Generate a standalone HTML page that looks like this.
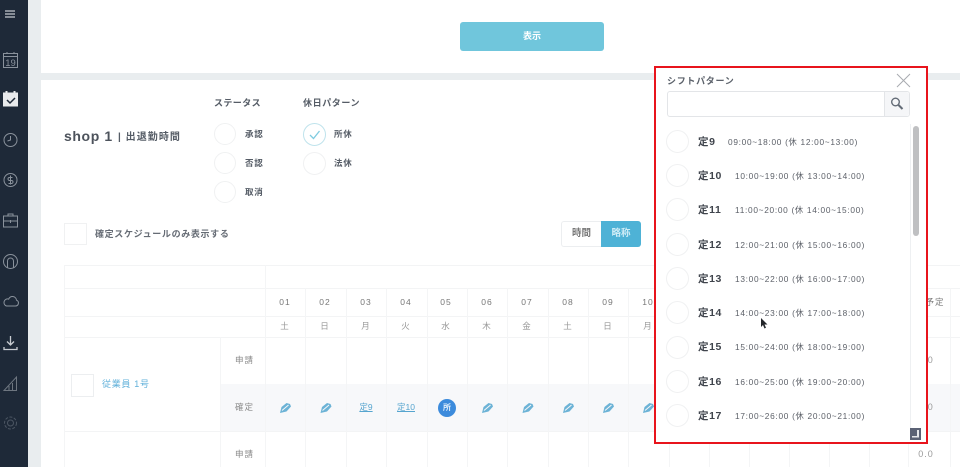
<!DOCTYPE html>
<html lang="ja"><head><meta charset="utf-8"><style>
*{box-sizing:border-box}
html,body{margin:0;padding:0}
body{width:960px;height:467px;overflow:hidden;background:#fff;position:relative;font-family:"Liberation Sans","Noto Sans CJK JP",sans-serif;color:#555c66}
#w{position:absolute;left:0;top:0;width:960px;height:467px;overflow:hidden;background:#fff;filter:blur(.35px)}
.a{position:absolute;white-space:nowrap}
.h{position:absolute;background:#f3f4f5;height:1px}
.v{position:absolute;background:#f4f5f6;width:1px}
.c{position:absolute;border:1.5px solid #f0f1f2;border-radius:50%;background:#fff}
.t{font-size:9px;font-weight:bold;letter-spacing:.8px;line-height:12px;color:#555c66}
.d{font-size:8.5px;letter-spacing:1px;color:#777;line-height:12px;width:40px;text-align:center}
.w{color:#999}
.p{position:absolute}
.nm{position:absolute;left:698px;font-size:10.5px;font-weight:bold;letter-spacing:.6px;color:#3f444c;line-height:14px;white-space:nowrap}
.tm{position:absolute;font-size:8.3px;letter-spacing:.7px;color:#5c6068;line-height:12px;white-space:nowrap}
.lk{font-size:8.5px;color:#56a5cf;text-decoration:underline;width:40px;text-align:center;line-height:12px}
</style></head><body><div id="w">
<div class="a" style="left:0;top:0;width:28px;height:467px;background:#1e2938"></div>
<div class="a" style="left:28px;top:0;width:13px;height:467px;background:#e9edef"></div>
<div class="a" style="left:41px;top:73px;width:919px;height:7px;background:#e9edef"></div>

<svg class="p" style="left:0;top:0" width="28" height="467" fill="none" stroke="#8a929c" stroke-width="1">
<path d="M5 11h10M5 14h10M5 17h10" stroke="#c5c9ce" stroke-width="1.2"/>
<rect x="3.5" y="53.5" width="14" height="14"/><path d="M3.5 56.5h14M7 52v2M14 52v2"/>
<text x="10.5" y="66" font-size="9.5" font-family="Liberation Sans" fill="#8a929c" stroke="none" text-anchor="middle">19</text>
<rect x="3.5" y="93" width="14" height="13" fill="#e8eaec" stroke="#e8eaec"/><path d="M6.5 91v4M14.5 91v4" stroke="#e8eaec" stroke-width="2"/><path d="M7 100l3 3 5-5" stroke="#1e2938" stroke-width="1.5"/>
<circle cx="10.5" cy="140" r="6.5"/><path d="M10.5 136v4l-3 1"/>
<circle cx="10.5" cy="180" r="6.5"/><path d="M12.5 177.5h-3a1.3 1.3 0 0 0 0 3h2a1.3 1.3 0 0 1 0 3h-3M10.5 175.5v9"/>
<rect x="3.5" y="216" width="14" height="11"/><path d="M8 216v-2h5v2M3.5 221h14M10.5 220v3"/>
<circle cx="10.5" cy="261.5" r="7"/><path d="M7.5 268v-7a3 3 0 0 1 6 0v7"/>
<path d="M6.5 306h9a3 3 0 0 0 1-5.8 4 4 0 0 0-4-3.7 4 4 0 0 0-3.8 2.6 3.6 3.6 0 0 0-2.2 6.9z"/>
<path d="M10.5 336v9M7 341.500l3.500 3.500 3.500-3.500M4 347v2.500h13V347" stroke="#c8ccd1" stroke-width="1.300"/>
<path d="M4 390.500h12.500V377zM9 390v-4M12.500 390v-7" stroke="#6e7680"/>
<circle cx="10.500" cy="423" r="3" stroke="#4c5663"/><circle cx="10.500" cy="423" r="6" stroke="#4c5663" stroke-dasharray="3 1.500"/>
</svg>

<div class="a" style="left:460px;top:22px;width:144px;height:29px;background:#70c6dc;border-radius:3px;color:#fff;font-size:9px;font-weight:bold;text-align:center;line-height:28px">表示</div>

<div class="a t" style="left:214px;top:97px;letter-spacing:.4px">ステータス</div>
<div class="a t" style="left:303px;top:97px;letter-spacing:.6px">休日パターン</div>
<div class="a" style="left:64px;top:128px;font-size:14px;font-weight:bold;letter-spacing:.6px;line-height:17px;color:#4d535c">shop 1</div>
<div class="a t" style="left:118px;top:131px;font-size:10px;letter-spacing:1.05px;line-height:13px">| 出退勤時間</div>
<div class="c" style="left:214px;top:123px;width:22px;height:22px"></div>
<div class="c" style="left:214px;top:152px;width:22px;height:22px"></div>
<div class="c" style="left:214px;top:181px;width:22px;height:22px"></div>
<div class="a t" style="left:245px;top:128px;font-size:8.500px">承認</div>
<div class="a t" style="left:245px;top:157px;font-size:8.500px">否認</div>
<div class="a t" style="left:245px;top:186px;font-size:8.500px">取消</div>
<div class="c" style="left:303px;top:123px;width:23px;height:23px;border-color:#bfe3ec"></div>
<svg class="p" style="left:303px;top:123px" width="23" height="23" fill="none"><path d="M7 12l3.500 3.500L16.500 8" stroke="#7fcbe0" stroke-width="1.300"/></svg>
<div class="c" style="left:303px;top:152px;width:23px;height:23px"></div>
<div class="a t" style="left:334px;top:128px;font-size:8.500px">所休</div>
<div class="a t" style="left:334px;top:157px;font-size:8.500px">法休</div>
<div class="a" style="left:64px;top:223px;width:23px;height:22px;border:1.500px solid #f0f1f2"></div>
<div class="a t" style="left:95px;top:228px;color:#666c75;letter-spacing:.65px">確定スケジュールのみ表示する</div>

<div class="a" style="left:561px;top:221px;width:40px;height:26px;border:1.500px solid #eceef0;border-right:0;border-radius:3px 0 0 3px;font-size:9.500px;font-weight:bold;text-align:center;line-height:23px;color:#777">時間</div>
<div class="a" style="left:601px;top:221px;width:40px;height:26px;background:#4eb2d6;border-radius:0 3px 3px 0;font-size:9.500px;font-weight:bold;text-align:center;line-height:26px;color:#cfecf6">略称</div>

<!-- table -->
<div class="a" style="left:220px;top:384px;width:740px;height:47px;background:#f7f8fa"></div>
<div class="h" style="left:64px;top:265px;width:896px"></div>
<div class="h" style="left:64px;top:288px;width:896px"></div>
<div class="h" style="left:64px;top:316px;width:896px"></div>
<div class="h" style="left:64px;top:337px;width:896px"></div>
<div class="h" style="left:64px;top:431px;width:896px"></div>
<div class="v" style="left:64px;top:265px;height:202px"></div>
<div class="v" style="left:220px;top:337px;height:130px"></div>
<div class="v" style="left:265px;top:265px;height:202px"></div>
<div class="v" style="left:305px;top:288px;height:179px"></div>
<div class="v" style="left:346px;top:288px;height:179px"></div>
<div class="v" style="left:386px;top:288px;height:179px"></div>
<div class="v" style="left:427px;top:288px;height:179px"></div>
<div class="v" style="left:467px;top:288px;height:179px"></div>
<div class="v" style="left:507px;top:288px;height:179px"></div>
<div class="v" style="left:548px;top:288px;height:179px"></div>
<div class="v" style="left:588px;top:288px;height:179px"></div>
<div class="v" style="left:628px;top:288px;height:179px"></div>
<div class="v" style="left:669px;top:431px;height:36px"></div>
<div class="v" style="left:709px;top:431px;height:36px"></div>
<div class="v" style="left:749px;top:431px;height:36px"></div>
<div class="v" style="left:789px;top:431px;height:36px"></div>
<div class="v" style="left:829px;top:431px;height:36px"></div>
<div class="v" style="left:869px;top:431px;height:36px"></div>
<div class="v" style="left:908px;top:288px;height:179px"></div>
<div class="v" style="left:950px;top:288px;height:179px"></div>

<div class="a d" style="left:265px;top:296px">01</div><div class="a d" style="left:305px;top:296px">02</div><div class="a d" style="left:346px;top:296px">03</div><div class="a d" style="left:386px;top:296px">04</div><div class="a d" style="left:426px;top:296px">05</div><div class="a d" style="left:467px;top:296px">06</div><div class="a d" style="left:507px;top:296px">07</div><div class="a d" style="left:548px;top:296px">08</div><div class="a d" style="left:588px;top:296px">09</div><div class="a d" style="left:628px;top:296px">10</div>
<div class="a d w" style="left:265px;top:320px">土</div><div class="a d w" style="left:305px;top:320px">日</div><div class="a d w" style="left:346px;top:320px">月</div><div class="a d w" style="left:386px;top:320px">火</div><div class="a d w" style="left:426px;top:320px">水</div><div class="a d w" style="left:467px;top:320px">木</div><div class="a d w" style="left:507px;top:320px">金</div><div class="a d w" style="left:548px;top:320px">土</div><div class="a d w" style="left:588px;top:320px">日</div><div class="a d w" style="left:628px;top:320px">月</div>

<div class="a" style="left:71px;top:374px;width:23px;height:23px;border:1.500px solid #eceef0"></div>
<div class="a" style="left:102px;top:378px;font-size:9px;letter-spacing:.7px;line-height:12px;color:#62b1da">従業員 1号</div>
<div class="a d w" style="left:225px;top:354px;width:39px;color:#888">申請</div>
<div class="a d w" style="left:225px;top:401px;width:39px;color:#888">確定</div>
<div class="a d w" style="left:225px;top:448px;width:39px;color:#888">申請</div>

<svg class="p" style="left:265px;top:400px" width="400" height="16">
<g fill="#6cb3d6" stroke="none">
<path d="M15 13l1.500-6 5-4 3.500 1 1 2.500-4.500 5z"/><path d="M17 10.500l6.500-5.500" stroke="#f7f8fa" stroke-width="1" fill="none"/>
<path d="M55.500 13l1.500-6 5-4 3.500 1 1 2.500-4.500 5z"/><path d="M57.500 10.500l6.500-5.500" stroke="#f7f8fa" stroke-width="1" fill="none"/>
<path d="M217 13l1.500-6 5-4 3.500 1 1 2.500-4.500 5z"/><path d="M219 10.500l6.500-5.500" stroke="#f7f8fa" stroke-width="1" fill="none"/>
<path d="M257.500 13l1.500-6 5-4 3.500 1 1 2.500-4.500 5z"/><path d="M259.500 10.500l6.500-5.500" stroke="#f7f8fa" stroke-width="1" fill="none"/>
<path d="M298 13l1.500-6 5-4 3.500 1 1 2.500-4.500 5z"/><path d="M300 10.500l6.500-5.500" stroke="#f7f8fa" stroke-width="1" fill="none"/>
<path d="M338 13l1.500-6 5-4 3.500 1 1 2.500-4.500 5z"/><path d="M340 10.500l6.500-5.500" stroke="#f7f8fa" stroke-width="1" fill="none"/>
<path d="M378 13l1.500-6 5-4 3.500 1 1 2.500-4.500 5z"/><path d="M380 10.500l6.500-5.500" stroke="#f7f8fa" stroke-width="1" fill="none"/>
</g></svg>
<div class="a lk" style="left:346px;top:401px">定9</div>
<div class="a lk" style="left:386px;top:401px">定10</div>
<div class="a" style="left:438px;top:399px;width:18px;height:18px;border-radius:50%;background:#3c8bdc;color:#e4f0fb;font-size:8px;font-weight:bold;text-align:center;line-height:18px">所</div>

<div class="a d" style="left:915px;top:296px;width:40px;text-align:center">予定</div>
<div class="a d" style="left:906px;top:354px;color:#999;font-size:9px">0.0</div>
<div class="a d" style="left:906px;top:401px;color:#999;font-size:9px">0.0</div>
<div class="a d" style="left:906px;top:448px;color:#999;font-size:9px">0.0</div>

<!-- popup -->
<div class="a" style="left:654px;top:66px;width:274px;height:378px;background:#fff;border:2px solid #e8141c"></div>
<div class="v" style="left:910px;top:124px;height:310px;background:#eef0f2"></div>
<div class="a t" style="left:667px;top:75px;font-size:9px;color:#5c626b;letter-spacing:.7px">シフトパターン</div>
<svg class="p" style="left:896px;top:73px" width="16" height="15" fill="none"><path d="M1 1l13 13M14 1L1 14" stroke="#a8abb0" stroke-width="1"/></svg>
<div class="a" style="left:667px;top:91px;width:243px;height:26px;border:1px solid #e3e5e8;border-radius:3px;background:#fff"></div>
<div class="a" style="left:884px;top:92px;width:25px;height:24px;background:#f5f6f8;border-left:1px solid #e3e5e8;border-radius:0 3px 3px 0"></div>
<svg class="p" style="left:889px;top:96px" width="16" height="16" fill="none"><circle cx="6.500" cy="6" r="3.800" stroke="#636b76" stroke-width="1.400"/><path d="M9.500 9l4 4" stroke="#636b76" stroke-width="2"/></svg>
<div class="a" style="left:913px;top:126px;width:6px;height:110px;background:#bfc0c2;border-radius:3px"></div>

<div class="c" style="left:666px;top:130px;width:23px;height:23px"></div><div class="nm" style="top:135px">定9</div><div class="tm" style="left:728px;top:136px">09:00~18:00 (休 12:00~13:00)</div>
<div class="c" style="left:666px;top:164px;width:23px;height:23px"></div><div class="nm" style="top:169px">定10</div><div class="tm" style="left:735px;top:170px">10:00~19:00 (休 13:00~14:00)</div>
<div class="c" style="left:666px;top:198px;width:23px;height:23px"></div><div class="nm" style="top:203px">定11</div><div class="tm" style="left:735px;top:204px">11:00~20:00 (休 14:00~15:00)</div>
<div class="c" style="left:666px;top:233px;width:23px;height:23px"></div><div class="nm" style="top:238px">定12</div><div class="tm" style="left:735px;top:239px">12:00~21:00 (休 15:00~16:00)</div>
<div class="c" style="left:666px;top:267px;width:23px;height:23px"></div><div class="nm" style="top:272px">定13</div><div class="tm" style="left:735px;top:273px">13:00~22:00 (休 16:00~17:00)</div>
<div class="c" style="left:666px;top:301px;width:23px;height:23px"></div><div class="nm" style="top:306px">定14</div><div class="tm" style="left:735px;top:307px">14:00~23:00 (休 17:00~18:00)</div>
<div class="c" style="left:666px;top:336px;width:23px;height:23px"></div><div class="nm" style="top:340px">定15</div><div class="tm" style="left:735px;top:341px">15:00~24:00 (休 18:00~19:00)</div>
<div class="c" style="left:666px;top:370px;width:23px;height:23px"></div><div class="nm" style="top:375px">定16</div><div class="tm" style="left:735px;top:376px">16:00~25:00 (休 19:00~20:00)</div>
<div class="c" style="left:666px;top:404px;width:23px;height:23px"></div><div class="nm" style="top:409px">定17</div><div class="tm" style="left:735px;top:410px">17:00~26:00 (休 20:00~21:00)</div>

<svg class="p" style="left:760px;top:317px" width="9" height="13"><path d="M1 1v9l2-2 1.500 3.500 1.500-.7L4.500 7.500H7.500z" fill="#23262b"/></svg>
<svg class="p" style="left:910px;top:428px" width="11" height="12"><rect width="11" height="12" fill="#5b6275"/><path d="M2 8h5V2h2v7.500H2z" fill="#e4e6ea"/></svg>
</div></body></html>
